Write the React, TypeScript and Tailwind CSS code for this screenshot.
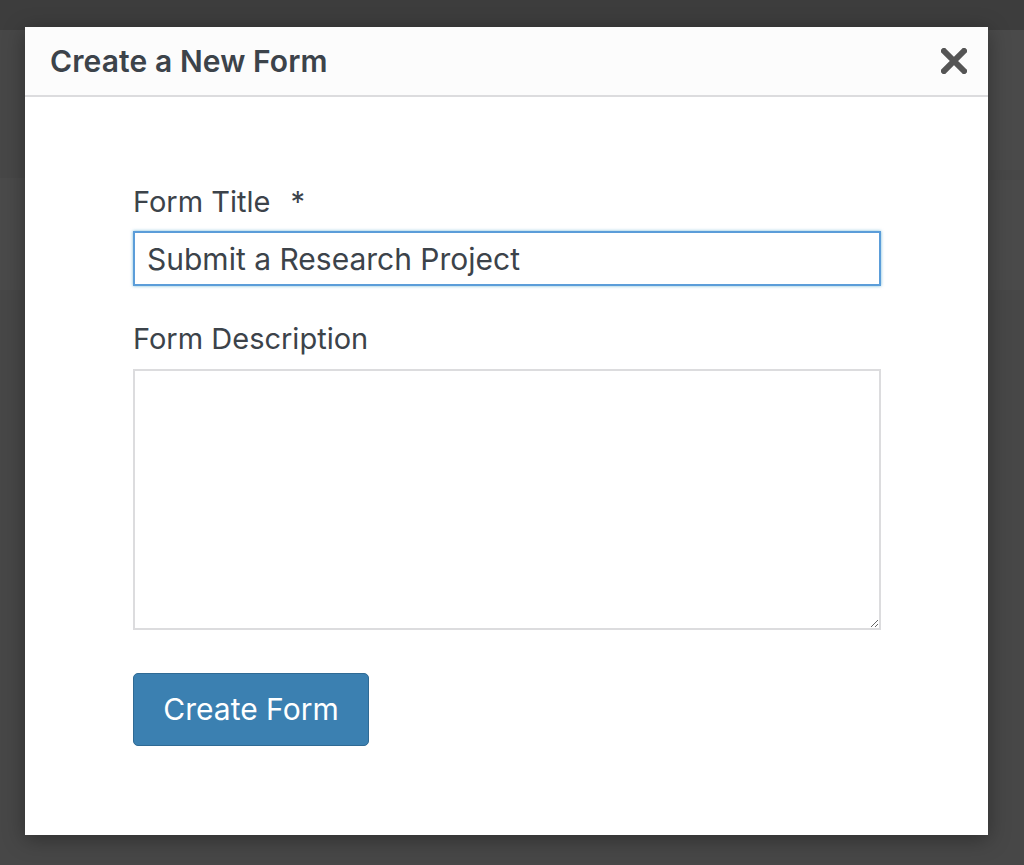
import { useState } from "react";

const font = { fontFamily: 'Inter, "Noto Sans", "Liberation Sans", sans-serif' };

function CloseIcon() {
  return (
    <svg width="26" height="26" viewBox="0 0 26 26" aria-hidden="true">
      <path d="M3 3 L23 23 M23 3 L3 23" stroke="#555" strokeWidth="6" strokeLinecap="square" />
    </svg>
  );
}

export default function App() {
  const [title, setTitle] = useState("Submit a Research Project");
  const [desc, setDesc] = useState("");

  return (
    <div className="relative h-[865px] w-[1024px] overflow-hidden bg-[#474747]" style={font}>
      {/* dimmed page behind the overlay */}
      <div className="absolute inset-x-0 top-0 h-[30px] bg-[#3d3d3d]" />
      <div className="absolute right-0 top-[30px] h-[140px] w-[40px] rounded-l-md bg-[#4a4a4a]" />
      <div className="absolute right-0 top-[180px] h-[110px] w-[40px] rounded-l-md bg-[#4a4a4a]" />
      <div className="absolute left-0 top-[178px] h-[112px] w-[25px] bg-[#4a4a4a]" />

      <div className="absolute left-[25px] top-[27px] flex h-[808px] w-[963px] flex-col bg-white shadow-[0_4px_20px_rgba(0,0,0,0.35)]">
        <div className="flex h-[70px] shrink-0 items-center justify-between border-b-2 border-[#dcdcde] bg-[#fcfcfc] pl-[25px] pr-[19px]">
          <h1 className="text-[30px] font-semibold tracking-[0.1px] text-[#3c434a]">Create a New Form</h1>
          <button className="flex h-[30px] w-[30px] items-center justify-center" aria-label="Close">
            <CloseIcon />
          </button>
        </div>

        <div className="flex flex-col pl-[108px] pt-[88px]">
          <label className="text-[29px] leading-[34px] text-[#3c434a]">
            Form Title <span className="ml-[12px]">*</span>
          </label>
          <input
            autoFocus
            value={title}
            onChange={(e) => setTitle(e.target.value)}
            className="mt-[12px] h-[55px] w-[748px] border-2 border-[#5b9dd9] px-[12px] text-[30px] text-[#3c434a] caret-[#3c434a] shadow-[0_0_3px_rgba(30,140,190,0.6)] outline-none"
          />
          <label className="mt-[36px] text-[29px] leading-[34px] text-[#3c434a]">Form Description</label>
          <textarea
            value={desc}
            onChange={(e) => setDesc(e.target.value)}
            className="mt-[13px] h-[261px] w-[748px] border-2 border-[#dcdcde] px-[12px] py-[8px] text-[26px] outline-none"
          />
          <button className="mt-[43px] h-[73px] w-[236px] rounded-[5px] border border-[#2f6a94] bg-[#3b80b1] text-[30px] text-white">
            Create Form
          </button>
        </div>
      </div>
    </div>
  );
}
